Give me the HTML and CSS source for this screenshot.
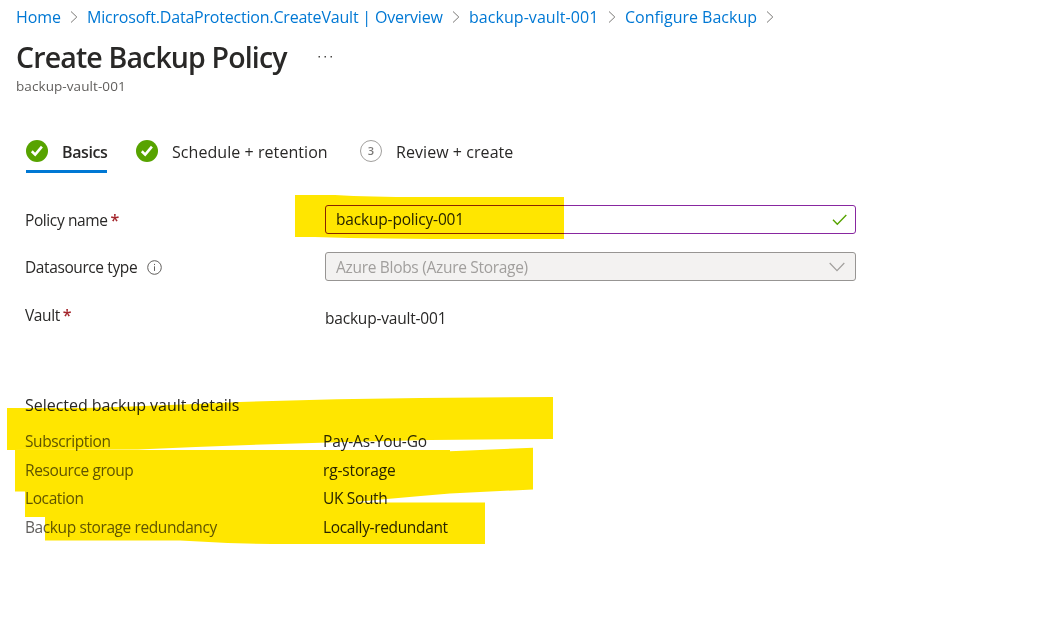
FILE: index.html
```html
<!DOCTYPE html>
<html lang="en">
<head>
<meta charset="utf-8">
<title>Create Backup Policy</title>
<link rel="stylesheet" href="styles.css">
</head>
<body>
<nav class="breadcrumb">
  <a class="crumb crumb-home">Home</a>
  <svg class="sep" viewBox="0 0 8 12"><path d="M1 .5 6.8 6 1 11.5"/></svg>
  <a class="crumb crumb-overview">Microsoft.DataProtection.CreateVault | Overview</a>
  <svg class="sep" viewBox="0 0 8 12"><path d="M1 .5 6.8 6 1 11.5"/></svg>
  <a class="crumb crumb-vault">backup-vault-001</a>
  <svg class="sep" viewBox="0 0 8 12"><path d="M1 .5 6.8 6 1 11.5"/></svg>
  <a class="crumb crumb-configure">Configure Backup</a>
  <svg class="sep" viewBox="0 0 8 12"><path d="M1 .5 6.8 6 1 11.5"/></svg>
</nav>
<header class="page-header">
  <div class="title-row">
    <h1 class="title">Create Backup Policy</h1>
    <svg class="more" viewBox="0 0 16 4"><path d="M.5 0H2v1.5H.5zM6.5 0H8v1.5H6.5zM12.5 0H14v1.5h-1.5z"/></svg>
  </div>
  <div class="subtitle">backup-vault-001</div>
</header>
<div class="tabs">
  <div class="tab tab-basics active">
    <svg class="step" viewBox="0 0 22 22"><circle class="done" cx="11" cy="11" r="11"/><path class="tick" d="m5.8 11.3 3.4 3.3 6.7-8"/></svg>
    <span class="tab-label">Basics</span>
  </div>
  <div class="tab tab-schedule">
    <svg class="step" viewBox="0 0 22 22"><circle class="done" cx="11" cy="11" r="11"/><path class="tick" d="m5.8 11.3 3.4 3.3 6.7-8"/></svg>
    <span class="tab-label">Schedule + retention</span>
  </div>
  <div class="tab tab-review">
    <span class="step number">3</span>
    <span class="tab-label">Review + create</span>
  </div>
</div>
<main class="form">
  <div class="field">
    <label class="label"><span>Policy name</span> <b class="required">*</b></label>
    <div class="box">
      <span class="v-policy">backup-policy-001</span>
      <svg class="valid" viewBox="0 0 16 12"><path d="M1 5.8 5.3 10.2 14.3 1"/></svg>
    </div>
  </div>
  <div class="field">
    <label class="label"><span>Datasource type</span>
      <svg class="info" viewBox="0 0 15 15"><circle cx="7.5" cy="7.5" r="6.8"/><path d="M7.5 6.3v4.6M7.5 3.9v1.2"/></svg>
    </label>
    <div class="box disabled">
      <span class="v-type">Azure Blobs (Azure Storage)</span>
      <svg class="chevron" viewBox="0 0 16 10"><path d="M.7 1 8 8.6 15.3 1"/></svg>
    </div>
  </div>
  <div class="field field-vault">
    <label class="label"><span>Vault</span> <b class="required">*</b></label>
    <div class="static">backup-vault-001</div>
  </div>
</main>
<section class="details">
  <h2 class="details-title">Selected backup vault details</h2>
  <dl class="list">
    <dt>Subscription</dt><dd class="d-sub">Pay-As-You-Go</dd>
    <dt>Resource group</dt><dd class="d-group">rg-storage</dd>
    <dt>Location</dt><dd>UK South</dd>
    <dt>Backup storage redundancy</dt><dd>Locally-redundant</dd>
  </dl>
</section>
<svg class="marker" viewBox="0 0 1038 643">
  <path d="M295 195H335Q370 197 420 197H564V239H480Q380 239 315 237H295Z"/>
  <path d="M7 408H85Q150 406 240 402Q330 399 420 398L553 397V439L430 440Q280 443 138 449.5L7 450Z"/>
  <path d="M15 450H450V451.3L533 447.8V489.5L450 493.5Q420 496 387 499L350 502.5H485V544H290Q235 544 180 540.5H45V517H25V491.5H15Z"/>
</svg>
</body>
</html>
```
FILE: styles.css
```css
* { box-sizing: border-box; }
body {
  margin: 0;
  width: 1038px;
  height: 643px;
  overflow: hidden;
  background: #fff;
  color: #292827;
  font: 15.5px/20px "Open Sans", "Noto Sans", sans-serif;
  letter-spacing: -.35px;
  white-space: nowrap;
}
h1, h2, dl, dd { margin: 0; font-weight: 400; }
svg { display: block; flex: none; fill: none; }

.breadcrumb { display: flex; align-items: center; height: 34px; padding-left: 16px; font-size: 16px; }
.crumb { color: #0078d4; flex: none; }
.crumb-home { width: 45px; letter-spacing: -.1px; }
.crumb-overview { width: 356px; letter-spacing: -.2px; }
.crumb-vault { width: 130px; letter-spacing: .05px; }
.crumb-configure { width: 132px; letter-spacing: 0; }
.sep { width: 8px; height: 12px; margin: 0 9px; stroke: #7a7876; }

.page-header { height: 102px; padding-left: 16px; }
.title-row { display: flex; height: 42px; }
.title { width: 302px; font-size: 28.5px; line-height: 46px; font-weight: 600; letter-spacing: -.85px; }
.more { width: 16px; height: 4px; margin-top: 22px; fill: #4a4846; }
.subtitle { color: #605e5c; font-size: 13.5px; line-height: 20px; letter-spacing: .08px; }

.tabs { display: flex; height: 37px; padding-left: 26px; font-size: 16px; }
.tab { display: flex; height: 37px; }
.tab-label { line-height: 33px; letter-spacing: .06px; }
.step { width: 22px; height: 22px; margin: 4px 14px 0 0; flex: none; }
.done { fill: #57a300; }
.tick { stroke: #fff; stroke-width: 2.6; }
.tab-basics { width: 81px; margin-right: 29px; }
.tab-basics .tab-label { letter-spacing: -.38px; }
.tab-schedule { width: 224px; }
.active { border-bottom: 3px solid #0078d4; font-weight: 600; }
.number { border: 1.5px solid #a19f9d; border-radius: 50%; color: #797775; font-size: 11px; font-weight: 600; line-height: 20px; text-align: center; letter-spacing: 0; }

.form { padding: 32px 0 0 25px; }
.field { display: flex; height: 47px; }
.label { display: flex; width: 300px; height: 30px; align-items: center; gap: 3px; letter-spacing: -.4px; }
.required { color: #a4262c; font-size: 16px; line-height: 20px; font-weight: 600; }
.box { display: flex; width: 531px; height: 29px; align-items: center; justify-content: space-between; border: 1px solid #8827a0; border-radius: 3px; padding: 0 7px 2px 10px; }
.v-policy { letter-spacing: -.18px; }
.v-type { letter-spacing: -.3px; }
.disabled { background: #f3f2f1; border-color: #979593; color: #a19f9d; padding: 0 10px 0 10px; }
.valid { width: 16px; height: 12px; stroke: #57a300; stroke-width: 1.4; margin-top: 2px; }
.chevron { width: 16px; height: 10px; stroke: #a19f9d; stroke-width: 1.2; }
.info { width: 15px; height: 15px; margin-left: 7px; stroke: #605e5c; }
.field-vault { padding-top: 1px; }
.static { line-height: 36px; letter-spacing: -.2px; }

.details { padding: 47px 0 0 25px; }
.details-title { font-size: 16px; line-height: 24px; letter-spacing: -.03px; }
.list { display: grid; grid-template-columns: 298px 1fr; grid-auto-rows: 28.7px; padding-top: 10px; line-height: 28.7px; }
dt { color: #605e5c; letter-spacing: -.4px; }
.d-sub { letter-spacing: -.15px; }
.d-group { letter-spacing: -.15px; }

.marker { position: absolute; left: 0; top: 0; width: 1038px; height: 643px; fill: #ffe600; mix-blend-mode: multiply; pointer-events: none; }
```
